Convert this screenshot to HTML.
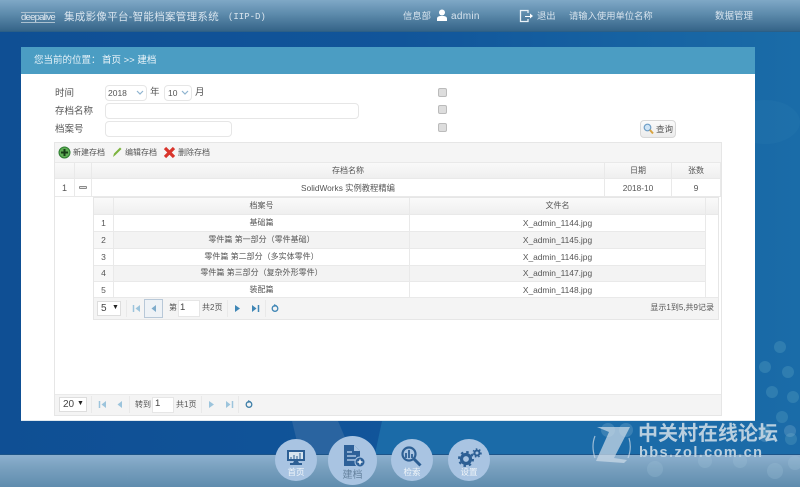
<!DOCTYPE html>
<html><head><meta charset="utf-8">
<style>
html,body{margin:0;padding:0}
body{width:800px;height:487px;overflow:hidden;position:relative;background:#135a9c}
#r{position:absolute;left:0;top:0;width:800px;height:487px;overflow:hidden;filter:blur(.35px);font-family:"Liberation Sans","Noto Sans CJK SC",sans-serif;font-size:8px;color:#555;background:#135a9c}
.a{position:absolute;white-space:nowrap}
.b{position:absolute;box-sizing:border-box}
.c{position:absolute;text-align:center;white-space:nowrap}
.inp{position:absolute;box-sizing:border-box;background:#fff;border:1px solid #e6e6e6;border-radius:4px}
.chk{position:absolute;width:9px;height:9px;box-sizing:border-box;background:#ddd;border:1px solid #bbb;border-radius:2px;left:438px}
.line{position:absolute;background:#e9e9e9}
.w{color:#d8e4ee}
.lab{color:#f0f5f9;font-size:8.5px}
</style></head><body><div id="r">
<div class="b" style="left:0;top:32px;width:800px;height:422px;background:linear-gradient(90deg,#0f4f94 0,#11559a 50%,#1a6ca8 100%)"></div>
<svg class="b" style="left:0;top:421px" width="800" height="33"><path d="M382 0H800V33H375Z" fill="#1b6ba8"/><path d="M292 0H338L352 33H300Z" fill="#2a64a0"/></svg>
<svg class="b" style="left:755px;top:47px" width="45" height="407">
<ellipse cx="10" cy="75" rx="35" ry="22" fill="#2a7ab0" opacity=".25"/>
<g fill="#4a94bb" opacity=".45"><circle cx="25" cy="300" r="6"/><circle cx="10" cy="320" r="6"/><circle cx="33" cy="325" r="6"/><circle cx="17" cy="345" r="6"/><circle cx="38" cy="350" r="6"/><circle cx="27" cy="370" r="6"/><circle cx="10" cy="385" r="6"/><circle cx="36" cy="392" r="6"/></g></svg>
<!-- header -->
<div class="b" style="left:0;top:0;width:800px;height:32px;background:linear-gradient(180deg,#7fa8c6 0,#5d8bac 45%,#356488 100%);border-bottom:1px solid #2c5f86"></div>
<div class="a" style="left:21px;top:12px;font-size:9.5px;letter-spacing:-.75px;color:#dfe8ef;border-top:1px solid #aac0d0;border-bottom:1px solid #aac0d0;line-height:9px">deepalive</div>
<div class="a w" style="left:64px;top:10px;font-size:10.5px;line-height:14px;letter-spacing:.3px">集成影像平台-智能档案管理系统</div>
<div class="a w" style="left:228px;top:10px;font-family:'Liberation Mono',monospace;font-size:9px;line-height:14px">(IIP-D)</div>
<div class="a w" style="left:403px;top:10px;font-size:9.3px;line-height:13px">信息部</div>
<svg class="b" style="left:436px;top:9px" width="12" height="13"><circle cx="6" cy="3.500" r="3" fill="#fff"/><path d="M1 12V9.500Q1 7.500 4 7L8 7Q11 7.500 11 9.500V12Z" fill="#fff"/></svg>
<div class="a w" style="left:451px;top:10px;font-size:10px;line-height:13px;letter-spacing:.3px">admin</div>
<svg class="b" style="left:519px;top:9px" width="15" height="14"><path d="M9 4V1.500H1.500V12.500H9V10" fill="none" stroke="#eaf2f8" stroke-width="1.300"/><path d="M6 7H11V4.500L14 7L11 9.500V8H6Z" fill="#fff"/></svg>
<div class="a w" style="left:537px;top:10px;font-size:9.300px;line-height:13px">退出</div>
<div class="a w" style="left:569px;top:10px;font-size:9.300px;line-height:13px">请输入使用单位名称</div>
<div class="a w" style="left:715px;top:10px;font-size:9.500px;line-height:13px">数据管理</div>
<!-- panel -->
<div class="b" style="left:21px;top:47px;width:734px;height:374px;background:#fff;border-bottom:1px solid #dfe8ee"></div>
<div class="b" style="left:21px;top:47px;width:734px;height:27px;background:#4b9dc3"></div>
<div class="a" style="left:34px;top:55px;font-size:9.500px;line-height:12px;color:#e6f2f8">您当前的位置：</div>
<div class="a" style="left:102px;top:55px;font-size:9.500px;line-height:12px;color:#eef6fa">首页 &gt;&gt; 建档</div>
<!-- form -->
<div class="a" style="left:55px;top:87px;font-size:9.500px;line-height:13px">时间</div>
<div class="a" style="left:55px;top:105px;font-size:9.500px;line-height:13px">存档名称</div>
<div class="a" style="left:55px;top:123px;font-size:9.500px;line-height:13px">档案号</div>
<div class="inp" style="left:105px;top:85px;width:42px;height:16px"></div>
<div class="a" style="left:108px;top:87px;font-size:8.500px;line-height:12px">2018</div>
<svg class="b" style="left:136px;top:90px" width="8" height="6"><path d="M1 1L4 4L7 1" fill="none" stroke="#8fb4d0" stroke-width="1.200"/></svg>
<div class="a" style="left:150px;top:86px;font-size:9.500px;line-height:13px">年</div>
<div class="inp" style="left:164px;top:85px;width:28px;height:16px"></div>
<div class="a" style="left:168px;top:87px;font-size:8.500px;line-height:12px">10</div>
<svg class="b" style="left:181px;top:90px" width="8" height="6"><path d="M1 1L4 4L7 1" fill="none" stroke="#8fb4d0" stroke-width="1.200"/></svg>
<div class="a" style="left:195px;top:86px;font-size:9.500px;line-height:13px">月</div>
<div class="inp" style="left:105px;top:103px;width:254px;height:16px"></div>
<div class="inp" style="left:105px;top:121px;width:127px;height:16px"></div>
<div class="chk" style="top:88px"></div>
<div class="chk" style="top:105px"></div>
<div class="chk" style="top:123px"></div>
<div class="b" style="left:640px;top:120px;width:36px;height:18px;border:1px solid #d8d8d8;border-radius:4px;background:linear-gradient(#fafafa,#ececec)"></div>
<svg class="b" style="left:643px;top:123px" width="11" height="12"><circle cx="4.500" cy="4.500" r="3.300" fill="#cfe4f5" stroke="#6f9ec6" stroke-width="1.200"/><path d="M7 7L10 10.500" stroke="#d9a441" stroke-width="2"/></svg>
<div class="a" style="left:656px;top:123px;line-height:12px;font-size:8.500px">查询</div>
<!-- grid outer -->
<div class="b" style="left:54px;top:142px;width:668px;height:274px;border:1px solid #e6e6e6;background:#fff"></div>
<div class="b" style="left:55px;top:143px;width:666px;height:19px;background:#f5f5f5"></div>
<svg class="b" style="left:58px;top:146px" width="13" height="13"><circle cx="6.500" cy="6.500" r="5.500" fill="#5fae55" stroke="#2f7d32"/><path d="M6.500 3V10M3 6.500H10" stroke="#173f17" stroke-width="2"/></svg>
<div class="a" style="left:73px;top:147px;line-height:12px">新建存档</div>
<svg class="b" style="left:111px;top:146px" width="12" height="12"><path d="M2 11L3 7.500L9 1.500L10.500 3L4.500 9Z" fill="#7db43f"/></svg>
<div class="a" style="left:125px;top:147px;line-height:12px">编辑存档</div>
<svg class="b" style="left:163px;top:146px" width="13" height="13"><path d="M2 2L11 11M11 2L2 11" stroke="#d9352c" stroke-width="3.200"/></svg>
<div class="a" style="left:178px;top:147px;line-height:12px">删除存档</div>
<div class="b" style="left:55px;top:162px;width:665px;height:16px;background:linear-gradient(#fafafa,#efefef)"></div>
<div class="line" style="left:55px;top:162px;width:666px;height:1px"></div>
<div class="line" style="left:55px;top:178px;width:666px;height:1px"></div>
<div class="line" style="left:55px;top:196px;width:666px;height:1px"></div>
<div class="line" style="left:74px;top:162px;width:1px;height:34px"></div>
<div class="line" style="left:91px;top:162px;width:1px;height:34px"></div>
<div class="line" style="left:604px;top:162px;width:1px;height:34px"></div>
<div class="line" style="left:671px;top:162px;width:1px;height:34px"></div>
<div class="line" style="left:720px;top:162px;width:1px;height:34px"></div>
<div class="c" style="left:92px;top:165px;width:512px;line-height:12px">存档名称</div>
<div class="c" style="left:605px;top:165px;width:66px;line-height:12px">日期</div>
<div class="c" style="left:672px;top:165px;width:48px;line-height:12px">张数</div>
<div class="c" style="left:55px;top:182px;width:19px;font-size:9px;line-height:12px">1</div>
<div class="b" style="left:79px;top:186px;width:8px;height:3px;background:#e8e8e8;border:1px solid #8a8a8a;border-radius:1px"></div>
<div class="c" style="left:92px;top:182px;width:512px;font-size:8.300px;line-height:12px">SolidWorks 实例教程精编</div>
<div class="c" style="left:605px;top:182px;width:66px;font-size:8.300px;line-height:12px">2018-10</div>
<div class="c" style="left:672px;top:182px;width:48px;font-size:8.500px;line-height:12px">9</div>
<!-- sub grid -->
<div class="b" style="left:93px;top:197px;width:626px;height:123px;border:1px solid #e6e6e6;background:#fff"></div>
<div class="b" style="left:94px;top:198px;width:624px;height:16px;background:linear-gradient(#fafafa,#efefef)"></div>
<div class="b" style="left:113px;top:231px;width:592px;height:17px;background:#f3f3f3"></div>
<div class="b" style="left:94px;top:231px;width:19px;height:17px;background:#f7f7f7"></div>
<div class="b" style="left:113px;top:265px;width:592px;height:16px;background:#f3f3f3"></div>
<div class="b" style="left:94px;top:265px;width:19px;height:16px;background:#f7f7f7"></div>
<div class="b" style="left:94px;top:298px;width:624px;height:21px;background:#f4f4f4"></div>
<div class="line" style="left:94px;top:214px;width:624px;height:1px"></div>
<div class="line" style="left:94px;top:231px;width:611px;height:1px"></div>
<div class="line" style="left:94px;top:248px;width:611px;height:1px"></div>
<div class="line" style="left:94px;top:265px;width:611px;height:1px"></div>
<div class="line" style="left:94px;top:281px;width:611px;height:1px"></div>
<div class="line" style="left:94px;top:297px;width:624px;height:1px"></div>
<div class="line" style="left:113px;top:198px;width:1px;height:100px"></div>
<div class="line" style="left:409px;top:198px;width:1px;height:100px"></div>
<div class="line" style="left:705px;top:198px;width:1px;height:100px"></div>
<div class="c" style="left:114px;top:200px;width:295px;line-height:12px">档案号</div>
<div class="c" style="left:410px;top:200px;width:295px;line-height:12px">文件名</div>
<div class="c" style="left:94px;top:217px;width:19px;font-size:8.500px;line-height:12px">1</div>
<div class="c" style="left:94px;top:234px;width:19px;font-size:8.500px;line-height:12px">2</div>
<div class="c" style="left:94px;top:251px;width:19px;font-size:8.500px;line-height:12px">3</div>
<div class="c" style="left:94px;top:267px;width:19px;font-size:8.500px;line-height:12px">4</div>
<div class="c" style="left:94px;top:284px;width:19px;font-size:8.500px;line-height:12px">5</div>
<div class="c" style="left:114px;top:217px;width:295px;line-height:12px">基础篇</div>
<div class="c" style="left:114px;top:234px;width:295px;line-height:12px">零件篇 第一部分（零件基础）</div>
<div class="c" style="left:114px;top:251px;width:295px;line-height:12px">零件篇 第二部分（多实体零件）</div>
<div class="c" style="left:114px;top:267px;width:295px;line-height:12px">零件篇 第三部分（复杂外形零件）</div>
<div class="c" style="left:114px;top:284px;width:295px;line-height:12px">装配篇</div>
<div class="c" style="left:410px;top:217px;width:295px;font-size:8.400px;line-height:12px">X_admin_1144.jpg</div>
<div class="c" style="left:410px;top:234px;width:295px;font-size:8.400px;line-height:12px">X_admin_1145.jpg</div>
<div class="c" style="left:410px;top:251px;width:295px;font-size:8.400px;line-height:12px">X_admin_1146.jpg</div>
<div class="c" style="left:410px;top:267px;width:295px;font-size:8.400px;line-height:12px">X_admin_1147.jpg</div>
<div class="c" style="left:410px;top:284px;width:295px;font-size:8.400px;line-height:12px">X_admin_1148.jpg</div>
<!-- sub pager -->
<div class="b" style="left:97px;top:301px;width:24px;height:15px;background:#fff;border:1px solid #ddd"></div>
<div class="a" style="left:101px;top:302px;font-size:10px;line-height:13px;color:#444">5</div>
<div class="a" style="left:112px;top:303px;font-size:7px;line-height:10px;color:#222">▼</div>
<div class="line" style="left:126px;top:300px;width:1px;height:17px"></div>
<svg class="b" style="left:132px;top:304px" width="9" height="9"><path d="M1.500 1V8" stroke="#9cc4dc" stroke-width="1.500"/><path d="M8 1V8L3.500 4.500Z" fill="#9cc4dc"/></svg>
<div class="b" style="left:144px;top:299px;width:19px;height:19px;background:#eef2f6;border:1px solid #b8c8d8"></div>
<svg class="b" style="left:150px;top:304px" width="7" height="9"><path d="M6 1V8L1.500 4.500Z" fill="#7faccb"/></svg>
<div class="a" style="left:169px;top:302px;line-height:12px">第</div>
<div class="b" style="left:178px;top:300px;width:22px;height:17px;background:#fff;border:1px solid #e6e6e6"></div>
<div class="a" style="left:180px;top:302px;font-size:9.500px;line-height:12px;color:#444">1</div>
<div class="a" style="left:202px;top:302px;line-height:12px">共2页</div>
<div class="line" style="left:227px;top:300px;width:1px;height:17px"></div>
<svg class="b" style="left:234px;top:304px" width="8" height="9"><path d="M1 1V8L6 4.500Z" fill="#3f86b5"/></svg>
<svg class="b" style="left:251px;top:304px" width="9" height="9"><path d="M1 1V8L5.500 4.500Z" fill="#3f86b5"/><path d="M7.500 1V8" stroke="#3f86b5" stroke-width="1.500"/></svg>
<div class="line" style="left:265px;top:300px;width:1px;height:17px"></div>
<svg class="b" style="left:270px;top:303px" width="10" height="10"><circle cx="5" cy="5.500" r="2.800" fill="none" stroke="#3f86b5" stroke-width="1.300"/><path d="M4 1L7 2.500L4.500 4Z" fill="#3f86b5"/></svg>
<div class="a" style="right:86px;top:302px;line-height:12px">显示1到5,共9记录</div>
<!-- outer pager -->
<div class="b" style="left:55px;top:394px;width:666px;height:21px;background:#f4f4f4;border-top:1px solid #eaeaea"></div>
<div class="b" style="left:59px;top:397px;width:28px;height:15px;background:#fff;border:1px solid #ddd"></div>
<div class="a" style="left:63px;top:398px;font-size:10px;line-height:13px;color:#444">20</div>
<div class="a" style="left:77px;top:399px;font-size:7px;line-height:10px;color:#222">▼</div>
<div class="line" style="left:91px;top:396px;width:1px;height:17px"></div>
<svg class="b" style="left:98px;top:400px" width="9" height="9"><path d="M1.500 1V8" stroke="#9cc4dc" stroke-width="1.500"/><path d="M8 1V8L3.500 4.500Z" fill="#9cc4dc"/></svg>
<svg class="b" style="left:116px;top:400px" width="7" height="9"><path d="M6 1V8L1.500 4.500Z" fill="#9cc4dc"/></svg>
<div class="line" style="left:129px;top:396px;width:1px;height:17px"></div>
<div class="a" style="left:135px;top:399px;line-height:12px">转到</div>
<div class="b" style="left:152px;top:397px;width:22px;height:16px;background:#fff;border:1px solid #e6e6e6"></div>
<div class="a" style="left:155px;top:398px;font-size:9.500px;line-height:12px;color:#444">1</div>
<div class="a" style="left:176px;top:399px;line-height:12px">共1页</div>
<div class="line" style="left:201px;top:396px;width:1px;height:17px"></div>
<svg class="b" style="left:208px;top:400px" width="8" height="9"><path d="M1 1V8L6 4.500Z" fill="#9cc4dc"/></svg>
<svg class="b" style="left:225px;top:400px" width="9" height="9"><path d="M1 1V8L5.500 4.500Z" fill="#9cc4dc"/><path d="M7.500 1V8" stroke="#9cc4dc" stroke-width="1.500"/></svg>
<div class="line" style="left:238px;top:396px;width:1px;height:17px"></div>
<svg class="b" style="left:244px;top:399px" width="10" height="10"><circle cx="5" cy="5.500" r="2.800" fill="none" stroke="#3f7fa8" stroke-width="1.300"/><path d="M4 1L7 2.500L4.500 4Z" fill="#3f7fa8"/></svg>
<!-- footer -->
<div class="b" style="left:0;top:454px;width:800px;height:33px;background:linear-gradient(180deg,#8db0cf 0,#7ba2c0 35%,#5f8cae 100%);border-top:1px solid #1c5488"></div>
<svg class="b" style="left:590px;top:421px" width="210" height="66"><g fill="#a8cbdf" opacity=".22"><circle cx="18" cy="9" r="7"/><circle cx="36" cy="9" r="7"/><circle cx="65" cy="48" r="8"/><circle cx="115" cy="40" r="7"/><circle cx="150" cy="40" r="7"/><circle cx="185" cy="50" r="8"/><circle cx="205" cy="42" r="7"/><circle cx="175" cy="15" r="6"/><circle cx="200" cy="10" r="6"/></g></svg>
<!-- nav circles -->
<div class="b" style="left:275px;top:439px;width:42px;height:42px;border-radius:50%;background:#a9c4e2"></div>
<svg class="b" style="left:286px;top:450px" width="20" height="16"><path d="M1 0H19V11H1Z" fill="#2d5f94"/><path d="M3 2H17V9H3Z" fill="#d8e5ef"/><path d="M5 9V7M8 9V5M11 9V6M14 9V3" stroke="#5d86ac" stroke-width="1.400"/><path d="M8 11H12L13 13H7ZM4 13H16V15H4Z" fill="#2d5f94"/></svg>
<div class="c lab" style="left:275px;top:467px;width:42px;line-height:11px">首页</div>
<div class="b" style="left:328px;top:436px;width:49px;height:49px;border-radius:50%;background:#a9c4e2"></div>
<svg class="b" style="left:342px;top:444px" width="24" height="24"><path d="M2 1H12L18 7V22H2Z" fill="#2d6098"/><path d="M12 1L18 7H12Z" fill="#a9c4e2"/><path d="M5 8H10M5 12H14M5 16H13" stroke="#a9c4e2" stroke-width="1.500"/><circle cx="18" cy="18" r="5" fill="#2d6098" stroke="#a9c4e2"/><path d="M18 15.500V20.500M15.500 18H20.500" stroke="#fff" stroke-width="1.300"/></svg>
<div class="c" style="left:328px;top:469px;width:49px;font-size:10px;line-height:13px;color:#64819d">建档</div>
<div class="b" style="left:391px;top:439px;width:42px;height:42px;border-radius:50%;background:#a9c4e2"></div>
<svg class="b" style="left:400px;top:446px" width="23" height="21"><circle cx="9" cy="8" r="6.500" fill="none" stroke="#2d5f94" stroke-width="2.200"/><path d="M14 13L20.500 19.500" stroke="#2d5f94" stroke-width="3"/><path d="M6 12V7M9 12V4M12 12V8" stroke="#2d5f94" stroke-width="1.800"/></svg>
<div class="c lab" style="left:391px;top:467px;width:42px;line-height:11px">检索</div>
<div class="b" style="left:448px;top:439px;width:42px;height:42px;border-radius:50%;background:#a9c4e2"></div>
<svg class="b" style="left:457px;top:448px" width="25" height="19"><circle cx="9" cy="11" r="4.500" fill="none" stroke="#2d5f94" stroke-width="3.200"/><circle cx="9" cy="11" r="7" fill="none" stroke="#2d5f94" stroke-width="2" stroke-dasharray="2.500 3"/><circle cx="20" cy="5" r="2.500" fill="none" stroke="#2d5f94" stroke-width="2"/><circle cx="20" cy="5" r="4" fill="none" stroke="#2d5f94" stroke-width="1.500" stroke-dasharray="1.500 2"/></svg>
<div class="c lab" style="left:448px;top:467px;width:42px;line-height:11px">设置</div>
<!-- watermark -->
<svg class="b" style="left:592px;top:424px" width="44" height="46" opacity=".75"><path d="M5 3H38L22 34L35 36L32 39L4 37L17 8Z" fill="#c8d8e6"/><path d="M3 12Q-1 22 3 34M37 14Q40 24 36 34" fill="none" stroke="#c8d8e6" stroke-width="1.200"/></svg>
<div class="a" style="left:638px;top:421px;font-size:20px;line-height:26px;font-weight:bold;color:#b9cfdf">中关村在线论坛</div>
<div class="a" style="left:639px;top:444px;font-size:14.500px;line-height:18px;font-weight:bold;color:#b9cfdf;letter-spacing:1.400px">bbs.zol.com.cn</div>
</div></body></html>
